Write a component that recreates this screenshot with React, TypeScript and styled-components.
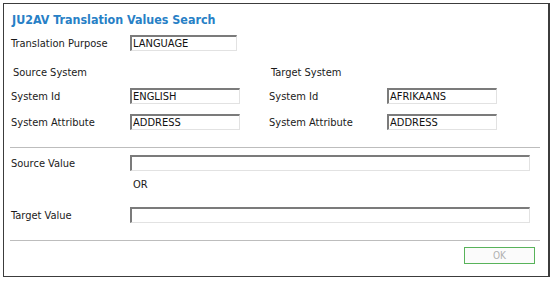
import styled, { createGlobalStyle } from "styled-components";

const GlobalStyle = createGlobalStyle`
  html, body {
    margin: 0;
    padding: 0;
    background: #ffffff;
  }
  body {
    font-family: "DejaVu Sans Condensed", "DejaVu Sans", sans-serif;
    font-size: 11px;
    color: #1a1a1a;
  }
`;

const Dialog = styled.div`
  box-sizing: border-box;
  margin: 3px 0 0 3px;
  width: 547px;
  height: 274px;
  border: 1px solid #3c3c3c;
  border-right-width: 2px;
  padding: 0 0 0 7px;
  display: flex;
  flex-direction: column;
`;

const Title = styled.h1`
  margin: 0;
  height: 29px;
  display: flex;
  align-items: center;
  padding: 1px 0 0 1px;
  box-sizing: border-box;
  font-family: "DejaVu Sans Condensed", "DejaVu Sans", sans-serif;
  font-weight: bold;
  font-size: 12.4px;
  color: #2780c6;
`;

const Row = styled.div<{ $top?: number }>`
  display: grid;
  grid-template-columns: 119px 110px 29px 118px 110px;
  align-items: center;
  height: 16px;
  margin-top: ${(p) => p.$top ?? 0}px;
`;

const WideRow = styled.div<{ $top?: number }>`
  display: grid;
  grid-template-columns: 119px 400px;
  align-items: center;
  height: 16px;
  margin-top: ${(p) => p.$top ?? 0}px;
`;

const Label = styled.span<{ $indent?: number }>`
  padding-left: ${(p) => p.$indent ?? 0}px;
  white-space: nowrap;
`;

const Field = styled.div<{ $w?: number }>`
  box-sizing: border-box;
  width: ${(p) => p.$w ?? 110}px;
  height: 16px;
  border-top: 2px solid #7b7b7b;
  border-left: 2px solid #7b7b7b;
  border-right: 1px solid #e2e2e2;
  border-bottom: 1px solid #e2e2e2;
  padding-left: 1px;
  line-height: 13px;
  font-size: 11px;
  color: #111;
  white-space: nowrap;
`;

const Divider = styled.hr<{ $top: number }>`
  margin: ${(p) => p.$top}px 0 0 -1px;
  width: 530px;
  border: none;
  border-top: 1px solid #bdbdbd;
  height: 0;
`;

const OrText = styled.div`
  margin: 7px 0 0 122px;
  height: 14px;
  line-height: 14px;
`;

const Footer = styled.div`
  display: flex;
  justify-content: flex-end;
  padding-right: 13px;
  margin-top: 6px;
`;

const OkButton = styled.button`
  box-sizing: border-box;
  width: 71px;
  height: 17px;
  border: 1px solid #58b35a;
  background: #fbfbfb;
  color: #b0b0b0;
  font-family: "DejaVu Sans Condensed", "DejaVu Sans", sans-serif;
  font-size: 10px;
  padding: 0;
`;

export default function App() {
  return (
    <>
      <GlobalStyle />
      <Dialog>
        <Title>JU2AV Translation Values Search</Title>
        <Row $top={2}>
          <Label>Translation Purpose</Label>
          <Field $w={107}>LANGUAGE</Field>
        </Row>
        <Row $top={13}>
          <Label $indent={2}>Source System</Label>
          <span />
          <span />
          <Label $indent={2}>Target System</Label>
        </Row>
        <Row $top={8}>
          <Label>System Id</Label>
          <Field>ENGLISH</Field>
          <span />
          <Label>System Id</Label>
          <Field>AFRIKAANS</Field>
        </Row>
        <Row $top={10}>
          <Label>System Attribute</Label>
          <Field>ADDRESS</Field>
          <span />
          <Label>System Attribute</Label>
          <Field>ADDRESS</Field>
        </Row>
        <Divider $top={17} />
        <WideRow $top={7}>
          <Label>Source Value</Label>
          <Field $w={400} />
        </WideRow>
        <OrText>OR</OrText>
        <WideRow $top={15}>
          <Label>Target Value</Label>
          <Field $w={400} />
        </WideRow>
        <Divider $top={17} />
        <Footer>
          <OkButton>OK</OkButton>
        </Footer>
      </Dialog>
    </>
  );
}
